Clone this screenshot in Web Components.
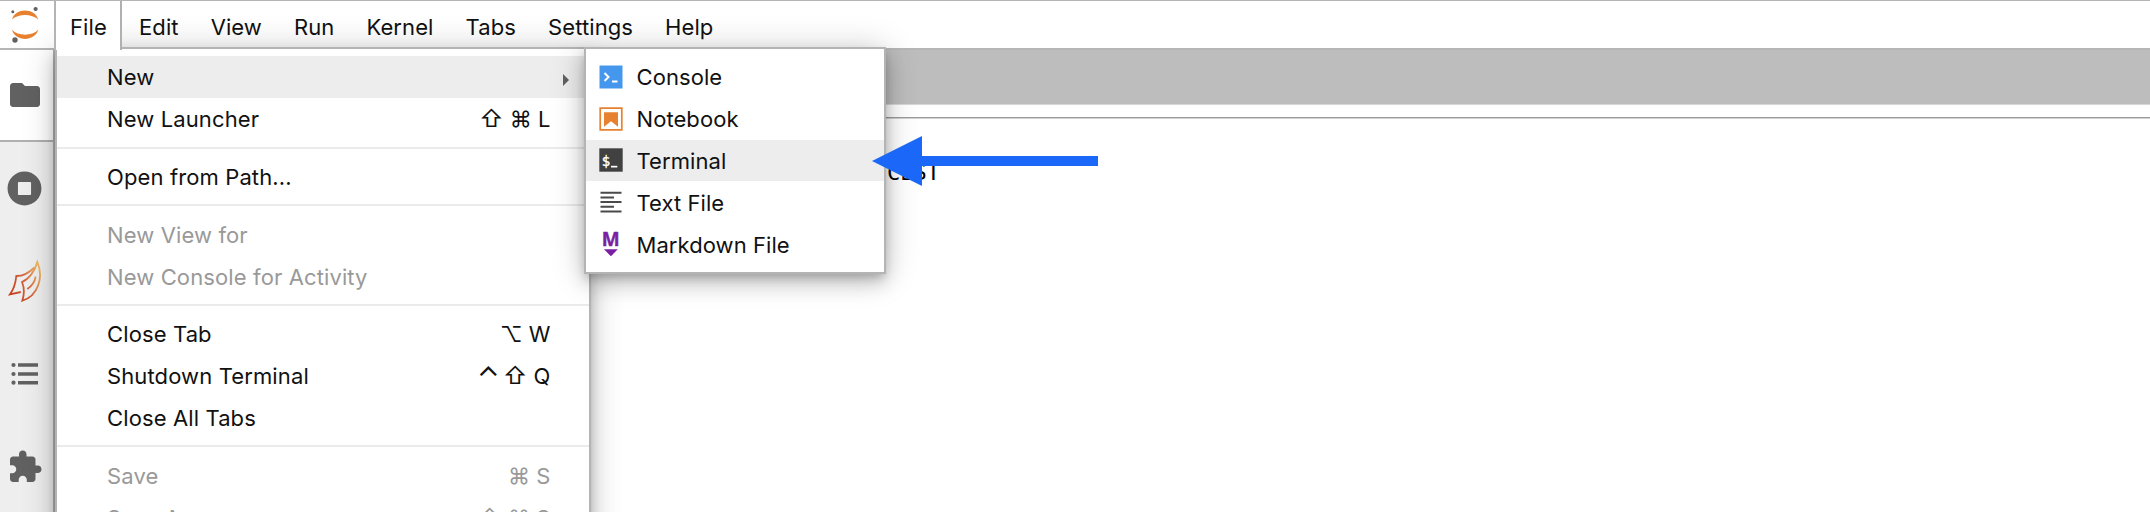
<!DOCTYPE html>
<html lang="en">
<head>
<meta charset="utf-8">
<title>JupyterLab</title>
<style>
html,body{margin:0;height:100%;overflow:hidden;background:#fff}
</style>
</head>
<body>
<lab-app></lab-app>
<script>
const define=(name,html)=>customElements.define(name,class extends HTMLElement{
  constructor(){super();const t=document.createElement('template');t.innerHTML=html;
    this.attachShadow({mode:'open'}).append(t.content.cloneNode(true));}
});

define('menu-tab',`<style>
:host{display:flex;align-items:center;box-sizing:border-box;height:48px;padding:4px 16px 0 16px;white-space:nowrap;letter-spacing:.1px}
:host([open]){width:68px;height:49px;padding-top:3px;margin-right:1px;background:#fff;border-left:2px solid #b4b4b4;border-right:2px solid #b0b0b0;padding-left:14px;position:relative;z-index:5}
</style><slot></slot>`);

define('side-tab',`<style>
:host{display:flex;align-items:center;justify-content:center;flex:none;box-sizing:border-box;width:55px;height:92.8px;padding-right:6px}
:host([current]){background:#fff;height:92px;border-bottom:2px solid #b0b0b0}
</style><slot></slot>`);

define('menu-row',`<style>
:host{display:flex;align-items:center;box-sizing:border-box;height:41.8px;padding:0 38.5px 0 50px;white-space:nowrap;flex:none;letter-spacing:.12px}
:host([active]){background:#ededed}
:host([disabled]){color:#999}
:host([arrow]){padding-right:20px}
:host([sub]){padding:0 12px 0 12.5px;letter-spacing:.07px}
::slotted(svg){flex:none;display:block;margin-right:14px}
.t{flex:1;padding-top:1px}
.k{padding-top:1px;display:flex}
</style><slot name="icon"></slot><span class="t"><slot></slot></span><span class="k"><slot name="keys"></slot></span>`);

define('menu-line',`<style>
:host{display:block;flex:none;height:16px;padding-top:7px;box-sizing:border-box}
div{height:2px;background:#ebebeb}
</style><div></div>`);

define('menu-panel',`<style>
:host{display:flex;flex-direction:column;box-sizing:border-box;background:#fff;border:2px solid #b4b4b4;padding:7px 0;
box-shadow:0 5px 9px -2px rgba(0,0,0,.2),0 10px 18px 0 rgba(0,0,0,.14),0 2px 32px 0 rgba(0,0,0,.2)}
</style><slot></slot>`);

define('jupyter-logo',`<style>:host{display:block;width:55px;height:48px}</style>
<svg width="55" height="48" viewBox="0 0 55 48"><g fill="#e8812f"><path d="M12 18.500C15 6.500 35 6.500 38.200 18.500C32 12.500 18 12.500 12 18.500Z"/><path d="M12 28.800C15 41 35 41 38.200 28.800C32 35.300 18 35.300 12 28.800Z"/></g><g fill="#616161"><circle cx="35.600" cy="8" r="2.100"/><circle cx="12.800" cy="10.800" r="1.500"/><circle cx="15" cy="39" r="2.700"/></g></svg>`);

define('lab-app',`<style>
:host{display:grid;grid-template-rows:50px 1fr;width:2150px;height:512px;overflow:hidden;position:relative;background:#fff;color:#111;font:22px/28px Inter,"Noto Sans",sans-serif}
header{display:flex;box-sizing:border-box;border-top:1px solid #b4b4b4;border-bottom:2px solid #b6b6b6;height:50px;background:#fff}
.logo{width:54px;flex:none;height:47px}
main{display:grid;grid-template-columns:55px 1fr;min-height:0}
aside{background:#eee;border-right:2px solid #b0b0b0;box-sizing:border-box;display:flex;flex-direction:column;overflow:hidden;width:55px}
.dock{display:flex;flex-direction:column;min-width:0}
.tabs{height:54px;background:#bdbdbd;flex:none}
.tool{height:14px;box-sizing:border-box;border-top:1px solid #d8d8d8;border-bottom:1px solid #9c9c9c;box-shadow:0 1px #d2d2d2;flex:none}
.term{padding:42px 0 0 832px;font:22px/26px "DejaVu Sans Mono","Liberation Mono",monospace;color:#000}
#file{position:absolute;left:55px;top:47px;width:536px;height:520px;z-index:1}
#new{position:absolute;left:584px;top:47px;width:302px;height:227px;z-index:3}
#arrow{position:absolute;left:872px;top:136px;z-index:6}
menu-tab[open]{flex:none}
i{font-style:normal;margin-left:6px;display:block;text-align:center}
i.up{font-size:24px}
i.ctl{font-size:29px;position:relative;top:1px;left:3px}
</style>
<header>
<jupyter-logo class="logo"></jupyter-logo>
<menu-tab open>File</menu-tab><menu-tab>Edit</menu-tab><menu-tab>View</menu-tab><menu-tab>Run</menu-tab><menu-tab>Kernel</menu-tab><menu-tab>Tabs</menu-tab><menu-tab>Settings</menu-tab><menu-tab>Help</menu-tab>
</header>
<main>
<aside>
<side-tab current><svg width="36" height="36" viewBox="0 0 24 24" fill="#616161"><path d="M10 4H4c-1.100 0-1.990.9-1.990 2L2 18c0 1.100.9 2 2 2h16c1.100 0 2-.9 2-2V8c0-1.100-.9-2-2-2h-8l-2-2z"/></svg></side-tab>
<side-tab><svg width="35" height="35" viewBox="0 0 512 512" fill="#616161"><path d="M256 8C119 8 8 119 8 256s111 248 248 248 248-111 248-248S393 8 256 8zm96 328c0 8.800-7.200 16-16 16H176c-8.800 0-16-7.200-16-16V176c0-8.800 7.200-16 16-16h160c8.800 0 16 7.200 16 16v160z"/></svg></side-tab>
<side-tab><svg width="36" height="44" viewBox="0 0 36 44" fill="none" stroke-width="1.800" stroke-linejoin="miter"><defs><linearGradient id="g" x1="2" x2="34" y1="30" y2="14" gradientUnits="userSpaceOnUse"><stop stop-color="#c5401f"/><stop offset=".5" stop-color="#d2633a"/><stop offset="1" stop-color="#efb25e"/></linearGradient></defs><g stroke="url(#g)"><path d="M27.300 8.300C22 14 15 17 9.300 17C8.500 25 7 30 3 35.300L13.800 33"/><path d="M15 23C22 20 28 12 30.300 3C37 18 31 37 15.300 41.700C17.500 35 17.500 29 15 23Z"/><path d="M20.300 30C25 27 28 22 28.700 17.700"/></g></svg></side-tab>
<side-tab><svg width="28" height="24" viewBox="0 0 28 24" fill="#616161"><circle cx="2.500" cy="3" r="2.100"/><circle cx="2.500" cy="12" r="2.100"/><circle cx="2.500" cy="20.700" r="2.100"/><path d="M7 1.200h20v3.600H7zM7 10.200h20v3.600H7zM7 18.900h20v3.600H7z"/></svg></side-tab>
<side-tab><svg width="36" height="36" viewBox="0 0 24 24" fill="#616161"><path d="M20.500 11H19V7c0-1.100-.9-2-2-2h-4V3.500C13 2.120 11.880 1 10.500 1S8 2.120 8 3.500V5H4c-1.100 0-1.990.9-1.990 2v3.800H3.500c1.490 0 2.700 1.210 2.700 2.700s-1.210 2.700-2.700 2.700H2V20c0 1.100.9 2 2 2h3.800v-1.500c0-1.490 1.210-2.700 2.700-2.700 1.490 0 2.700 1.210 2.700 2.700V22H17c1.100 0 2-.9 2-2v-4h1.500c1.380 0 2.500-1.120 2.500-2.500S21.880 11 20.500 11z"/></svg></side-tab>
</aside>
<section class="dock"><div class="tabs"></div><div class="tool"></div><div class="term">CEST</div></section>
</main>
<menu-panel id="file">
<menu-row active arrow>New<svg slot="keys" width="6" height="12" viewBox="0 0 6 12" style="margin:6px 0 0"><path d="M0 0L6 6L0 12Z" fill="#616161"/></svg></menu-row>
<menu-row>New Launcher<i slot="keys" class="up">⇧</i><i slot="keys">⌘</i><i slot="keys">L</i></menu-row>
<menu-line></menu-line>
<menu-row>Open from Path...</menu-row>
<menu-line></menu-line>
<menu-row disabled>New View for</menu-row>
<menu-row disabled>New Console for Activity</menu-row>
<menu-line></menu-line>
<menu-row>Close Tab<i slot="keys">⌥</i><i slot="keys">W</i></menu-row>
<menu-row>Shutdown Terminal<i slot="keys" class="ctl">⌃</i><i slot="keys" class="up">⇧</i><i slot="keys">Q</i></menu-row>
<menu-row>Close All Tabs</menu-row>
<menu-line></menu-line>
<menu-row disabled>Save<i slot="keys">⌘</i><i slot="keys">S</i></menu-row>
<menu-row disabled>Save As...<i slot="keys" class="up">⇧</i><i slot="keys">⌘</i><i slot="keys">S</i></menu-row>
</menu-panel>
<menu-panel id="new">
<menu-row sub><svg slot="icon" width="24" height="24" viewBox="0 0 24 24"><path fill="#4596ed" d="M.5.500h23v23H.5z"/><path d="M5.500 8L9.500 12L5.500 16" fill="none" stroke="#fff" stroke-width="2"/><path d="M13 15.500h5.500v2H13z" fill="#fff"/></svg>Console</menu-row>
<menu-row sub><svg slot="icon" width="24" height="24" viewBox="0 0 24 24"><path fill="none" stroke="#e8812f" stroke-width="1.700" d="M1.200 1.200h21.600v21.600H1.200z"/><path fill="#e8812f" d="M5 5.200h14v14.600l-7-5.600-7 5.600z"/></svg>Notebook</menu-row>
<menu-row sub active><svg slot="icon" width="24" height="24" viewBox="0 0 24 24"><path fill="#414141" d="M.3.300h23.400v23.400H.3z"/><text x="2.800" y="18" font-family="DejaVu Sans Mono" font-size="14" fill="#fff" stroke="#fff" stroke-width=".4">$</text><path d="M12 17.800h6.300v1.700H12z" fill="#fff"/></svg>Terminal</menu-row>
<menu-row sub><svg slot="icon" width="24" height="24" viewBox="0 0 24 24" fill="#4a4a4a"><path d="M1.500 1.800h21v2h-21zM1.500 6.400h13.500v2h-13.500zM1.500 11h21v2h-21zM1.500 15.700h13.500v2h-13.500zM1.500 20.400h21v2h-21z"/></svg>Text File</menu-row>
<menu-row sub><svg slot="icon" width="24" height="28" viewBox="0 0 24 28"><text x="11.700" y="16" text-anchor="middle" font-family="Open Sans" font-size="19" font-weight="bold" fill="#7b1fa2" stroke="#7b1fa2" stroke-width=".4">M</text><path d="M5 19.300h13.800L11.900 26.300z" fill="#7b1fa2"/></svg>Markdown File</menu-row>
</menu-panel>
<svg id="arrow" width="227" height="50" viewBox="0 0 227 50"><path d="M0 25L50 0V20H226V30H50V50Z" fill="#1b67f8"/></svg>`);
</script>
</body>
</html>
